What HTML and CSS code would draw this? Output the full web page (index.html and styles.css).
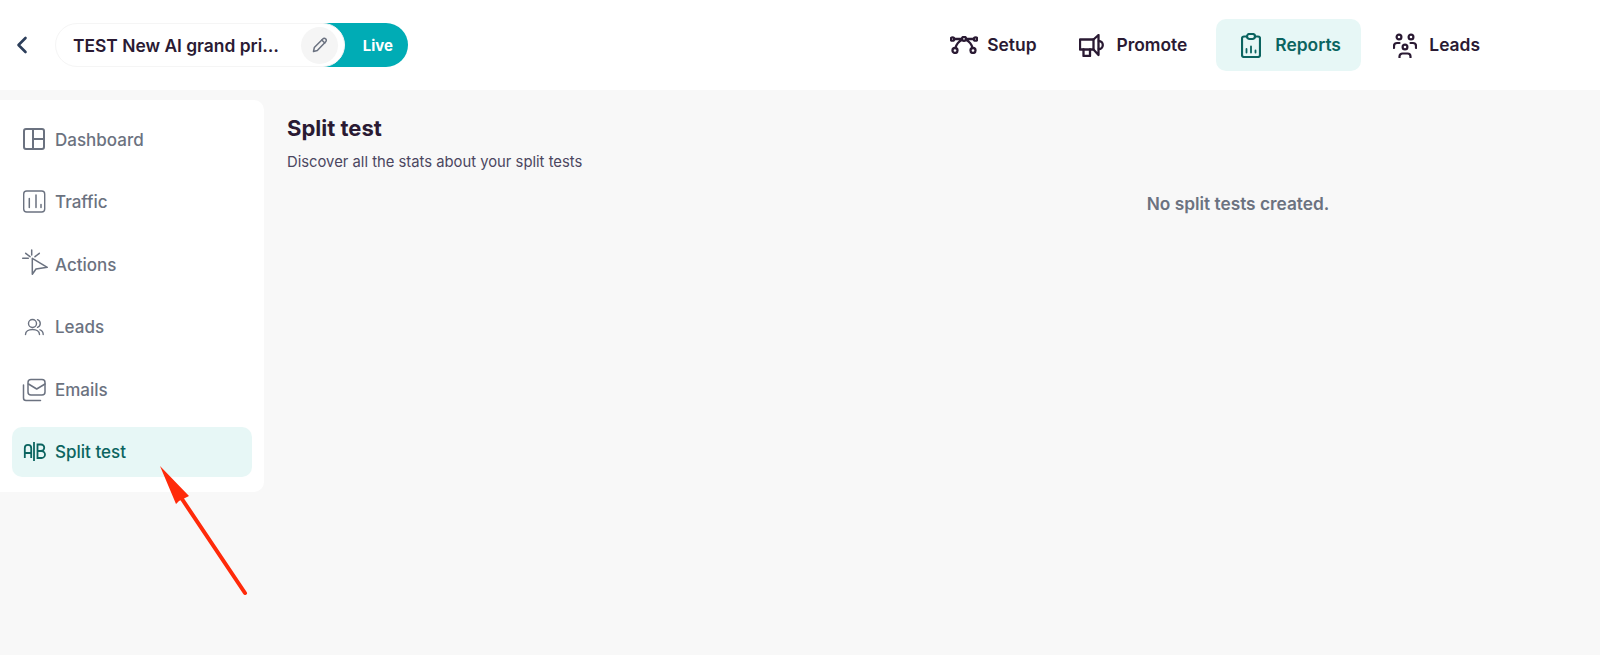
FILE: index.html
```html
<!DOCTYPE html>
<html lang="en">
<head>
<meta charset="utf-8">
<title>Split test</title>
<link rel="stylesheet" href="styles.css">
</head>
<body>
<header class="topbar">
  <div class="topbar-left">
    <button class="back" aria-label="Back">
      <svg width="14" height="18" viewBox="0 0 14 18" fill="none" stroke="#2c3e5a" stroke-width="2.6" stroke-linecap="round" stroke-linejoin="round"><path d="M10.500 2 3.500 9l7 7"/></svg>
    </button>
    <div class="campaign">
      <div class="title-pill">
        <span class="title-text">TEST New AI grand pri…</span>
        <span class="edit">
          <svg width="18" height="18" viewBox="0 0 18 18" fill="none" stroke="#6b7280" stroke-width="1.500" stroke-linecap="round" stroke-linejoin="round"><path d="M2.500 15.500 3.300 11.600 11.800 2.900a2 2 0 0 1 2.900 0 2 2 0 0 1 0 2.900L6.300 14.600Z"/><path d="m10.800 4 3 3"/></svg>
        </span>
      </div>
      <div class="live">Live</div>
    </div>
  </div>
  <nav class="mainnav">
    <a class="mainnav-item nav-setup">
      <svg width="28" height="18" viewBox="0 0 28 18" fill="none" stroke="#2a1a33" stroke-width="2.300" stroke-linecap="round"><circle cx="2.500" cy="3" r="1.700"/><circle cx="14" cy="2.800" r="2"/><circle cx="25.500" cy="3" r="1.700"/><circle cx="5" cy="14.500" r="2.500"/><circle cx="23" cy="14.500" r="2.500"/><path d="M4.500 3H12M16 3h7.500M11.800 4C8.500 5.500 6.500 8 5.500 12M16.200 4c3.300 1.500 5.300 4 6.300 8"/></svg>
      <span>Setup</span>
    </a>
    <a class="mainnav-item nav-promote">
      <svg width="25" height="23" viewBox="0 0 25 23" fill="none" stroke="#2a1a33" stroke-width="2.300" stroke-linejoin="round" stroke-linecap="round"><path d="M1 5.500h13.500L19.500 1v20l-5-5.500H1Z"/><path d="M14.500 5.500v10M4.500 15.500V22h6.500v-6.500"/><path d="M19.800 7a4 4 0 0 1 0 8"/></svg>
      <span>Promote</span>
    </a>
    <a class="mainnav-item is-active nav-reports">
      <svg width="20" height="25" viewBox="0 0 20 25" fill="none" stroke="#0b6460" stroke-width="2.200" stroke-linecap="round" stroke-linejoin="round"><path d="M6 3.500H3A2 2 0 0 0 1 5.500V22a2 2 0 0 0 2 2h14a2 2 0 0 0 2-2V5.500a2 2 0 0 0-2-2h-3"/><rect x="6" y="1" width="8" height="5" rx="2.500"/><path d="M5.500 19.500v-3.500M10 19.500v-6M14.500 19.500v-2" stroke-width="1.800"/></svg>
      <span>Reports</span>
    </a>
    <a class="mainnav-item nav-leads">
      <svg width="24" height="25" viewBox="0 0 24 25" fill="none" stroke="#2a1a33" stroke-width="2.200" stroke-linecap="round"><circle cx="6" cy="4" r="2.400"/><circle cx="18" cy="4" r="2.400"/><circle cx="12" cy="14" r="2.400"/><path d="M1 15v-2a3 3 0 0 1 3-3h2.500M23 15v-2a3 3 0 0 0-3-3h-2.500M6.500 24.500v-1a3 3 0 0 1 3-3h5a3 3 0 0 1 3 3v1"/></svg>
      <span>Leads</span>
    </a>
  </nav>
</header>
<main class="workspace">
  <aside class="sidebar">
    <a class="side-item">
      <svg class="side-icon" viewBox="0 0 24 24" fill="none" stroke="#6b7280" stroke-width="2"><rect x="2" y="1" width="20" height="20" rx="2"/><path d="M11 1v20M11 11h11"/></svg>
      <span>Dashboard</span>
    </a>
    <a class="side-item">
      <svg class="side-icon" viewBox="0 0 24 24" fill="none" stroke="#6b7280" stroke-width="1.400" stroke-linecap="round"><rect x="1.700" y="1" width="21" height="21" rx="3"/><path d="M7.300 17.500v-9M14 17.500V5M19 17.500v-3" stroke-width="1.500"/></svg>
      <span>Traffic</span>
    </a>
    <a class="side-item">
      <svg class="side-icon" viewBox="0 0 24 24" fill="none" stroke="#6b7280" stroke-width="1.500" stroke-linecap="round" stroke-linejoin="round"><path d="M10.300 5.300v16l3.700-5.300 11.300-1.700Z"/><path d="M9.700-3v5M3.700.3 8 3.700M17.300.3 13 3.700M.7 5.300h5.600"/></svg>
      <span>Actions</span>
    </a>
    <a class="side-item">
      <svg class="side-icon" viewBox="0 0 24 24" fill="none" stroke="#6b7280" stroke-width="1.400" stroke-linecap="round"><circle cx="10.500" cy="8.500" r="4"/><path d="M3.500 19.500c0-3 3-5 7-5s7 2 7 5M15.500 4.700a4 4 0 0 1 0 7.600M18 14.800c2 .6 3.200 2.200 3.200 4.700"/></svg>
      <span>Leads</span>
    </a>
    <a class="side-item">
      <svg class="side-icon" viewBox="0 0 24 24" fill="none" stroke="#6b7280" stroke-width="1.500" stroke-linecap="round" stroke-linejoin="round"><rect x="6" y="1.500" width="17" height="15.500" rx="3"/><path d="m6.500 6 8.200 5L23 6"/><path d="M1.500 7v13a2.500 2.500 0 0 0 2.500 2.500h14.500"/></svg>
      <span>Emails</span>
    </a>
    <a class="side-item is-active">
      <svg class="side-icon" viewBox="0 0 24 24" fill="none" stroke="#0b6460" stroke-width="1.800"><path d="M2.800 18V8a3.200 3.200 0 0 1 6.400 0v10M2.800 13h6.400"/><path d="M12 2v19" stroke-width="1.800"/><path d="M15.500 4.500H19a3.200 3.200 0 0 1 0 6.500h-3.500Zm0 6.500h4a3.400 3.400 0 0 1 0 7h-4Z"/></svg>
      <span>Split test</span>
    </a>
  </aside>
  <section class="content">
    <h1 class="page-title">Split test</h1>
    <p class="page-sub">Discover all the stats about your split tests</p>
    <div class="empty-row"><p class="empty">No split tests created.</p></div>
  </section>
  <svg class="annotation" width="110" height="140" viewBox="0 0 110 140" fill="#ff2a0a" stroke="none">
    <path d="M0 0 29 30 19 35 16 38Z"/>
    <path d="M22 33 85 127" stroke="#ff2a0a" stroke-width="4" stroke-linecap="round"/>
  </svg>
</main>
</body>
</html>
```
FILE: styles.css
```css
* { box-sizing: border-box; }
html, body { height: 100%; }
body {
  margin: 0;
  display: flex;
  flex-direction: column;
  background: #f8f8f8;
  color: #2a1a33;
  font-family: Inter, "Liberation Sans", sans-serif;
  overflow: hidden;
}
a { color: inherit; text-decoration: none; }

.topbar {
  flex: none;
  height: 90px;
  background: #fff;
  display: flex;
  align-items: center;
  justify-content: space-between;
}
.topbar-left { display: flex; align-items: center; }
.back {
  width: 55px;
  height: 44px;
  padding: 0 0 0 15px;
  border: 0;
  background: none;
  display: flex;
  align-items: center;
}
.campaign { display: flex; height: 44px; }
.title-pill {
  position: relative;
  z-index: 1;
  width: 290px;
  height: 44px;
  background: #fff;
  border: 1px solid #f5f5f5;
  border-radius: 22px;
  display: flex;
  align-items: center;
  justify-content: space-between;
  padding: 0 6px 0 17px;
}
.title-text {
  font-size: 17.400px;
  font-weight: 600;
  white-space: nowrap;
}
.edit {
  width: 37px;
  height: 37px;
  border-radius: 50%;
  background: #f5f5f5;
  display: flex;
  align-items: center;
  justify-content: center;
}
.live {
  width: 86px;
  margin-left: -23px;
  padding-right: 15px;
  border-radius: 0 22px 22px 0;
  background: #00acb5;
  text-align: right;
  line-height: 46px;
  font-size: 15px;
  font-weight: 700;
  color: #fff;
}

.mainnav {
  display: flex;
  align-items: center;
  padding-right: 120px;
}
.mainnav-item {
  display: flex;
  align-items: center;
  height: 52px;
  border-radius: 10px;
  font-size: 17.400px;
  font-weight: 600;
}
.mainnav-item span { margin-top: -2px; }
.nav-setup { gap: 9.500px; margin-right: 43px; }
.nav-promote { gap: 12px; margin-right: 29px; }
.nav-reports { gap: 14px; width: 145px; padding-left: 25px; margin-right: 32px; }
.nav-leads { gap: 12px; }
.is-active { background: #e7f7f6; color: #0b6460; }

.workspace {
  flex: 1;
  display: flex;
  align-items: flex-start;
  position: relative;
  padding-top: 10px;
}
.sidebar {
  flex: none;
  width: 264px;
  height: 392px;
  padding: 15px 12px;
  background: #fff;
  border-radius: 0 10px 10px 0;
  display: flex;
  flex-direction: column;
  gap: 12.850px;
}
.side-item {
  display: flex;
  align-items: center;
  gap: 9px;
  flex: none;
  height: 49.600px;
  padding-left: 10px;
  border-radius: 10px;
  color: #6b7280;
  font-size: 17px;
  font-weight: 500;
}
.side-item.is-active { color: #0b6460; }
.side-icon { width: 24px; height: 24px; flex: none; overflow: visible; }

.content { flex: 1; padding: 15px 0 0 23px; }
.page-title {
  margin: 0;
  font-size: 22px;
  line-height: 26px;
  font-weight: 700;
}
.page-sub {
  margin: 11px 0 0;
  font-size: 14.800px;
  line-height: 20px;
  color: #4b4660;
}
.empty-row { display: flex; justify-content: flex-end; margin-top: 20px; }
.empty {
  width: 724px;
  margin: 0;
  text-align: center;
  font-size: 17.300px;
  line-height: 24px;
  font-weight: 600;
  color: #6b7280;
}
.annotation {
  position: absolute;
  left: 160px;
  top: 376px;
}
```
